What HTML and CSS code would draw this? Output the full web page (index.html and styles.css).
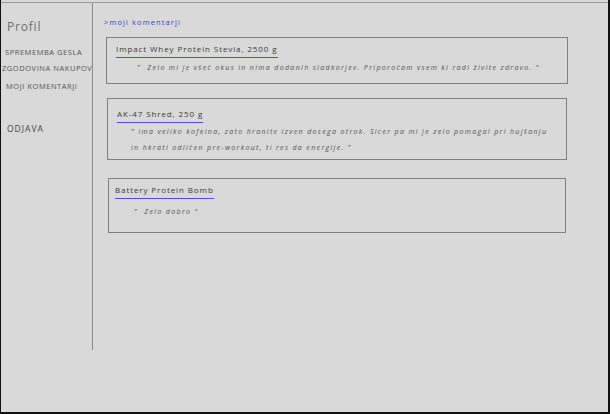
FILE: index.html
```html
<!DOCTYPE html>
<html>
<head>
<meta charset="utf-8">
<link rel="stylesheet" href="styles.css">
</head>
<body>
<div class="frame">
  <div class="layout">
    <aside class="sidebar">
      <div class="title">Profil</div>
      <nav class="nav">
        <div class="nav-item i1">SPREMEMBA GESLA</div>
        <div class="nav-item i2">ZGODOVINA NAKUPOV</div>
        <div class="nav-item i3">MOJI KOMENTARJI</div>
      </nav>
      <div class="logout">ODJAVA</div>
    </aside>
    <main class="main">
      <div class="crumb">&gt;moji komentarji</div>
      <div class="card c1">
        <div class="card-title">Impact Whey Protein Stevia, 2500 g</div>
        <p class="comment">"&nbsp; Zelo mi je všeč okus in nima dodanih sladkorjev. Priporočam vsem ki radi živite zdravo. "</p>
      </div>
      <div class="card c2">
        <div class="card-title">AK-47 Shred, 250 g</div>
        <p class="comment">" Ima veliko kofeina, zato hranite izven dosega otrok. Sicer pa mi je zelo pomagal pri hujšanju in hkrati odličen pre-workout, ti res da energije. "</p>
      </div>
      <div class="card c3">
        <div class="card-title">Battery Protein Bomb</div>
        <p class="comment">"&nbsp; Zelo dobro "</p>
      </div>
    </main>
  </div>
</div>
</body>
</html>
```
FILE: styles.css
```css
html, body {
  margin: 0;
  padding: 0;
  background: #111;
}
body {
  width: 610px;
  height: 414px;
  overflow: hidden;
  font-family: "Open Sans", "DejaVu Sans", sans-serif;
}
.frame {
  box-sizing: border-box;
  width: 610px;
  height: 412px;
  background: #d9d9d9;
  border-left: 1px solid #111;
  border-right: 2px solid #111;
  padding-top: 2px;
}
.layout {
  display: flex;
  border-top: 1px solid #9a9a9a;
  height: 347px;
}
.sidebar {
  width: 91px;
  flex: none;
  border-right: 1px solid #8a8a8a;
  color: #555;
}
.title {
  font-size: 12px;
  letter-spacing: 0.8px;
  color: #707070;
  padding: 16px 0 0 6px;
  line-height: 16px;
}
.nav {
  margin-top: 12px;
}
.nav-item {
  font-size: 7.5px;
  letter-spacing: 0.55px;
  line-height: 10px;
  white-space: nowrap;
}
.i1 { padding-left: 4px; }
.i2 { padding-left: 1px; margin-top: 6px; }
.i3 { padding-left: 5px; margin-top: 8px; }
.logout {
  font-size: 8.5px;
  letter-spacing: 1px;
  padding-left: 6px;
  margin-top: 32px;
  color: #444;
}
.main {
  flex: 1;
  padding: 14px 0 0 11px;
}
.crumb {
  font-size: 7.5px;
  letter-spacing: 1.1px;
  color: #3b3be0;
  line-height: 10px;
}
.card {
  box-sizing: border-box;
  border: 1px solid #808080;
  width: 462px;
  color: #333;
}
.c1 { margin-top: 10px; margin-left: 2px; height: 47px; padding: 5px 0 0 9px; }
.c2 { margin-top: 14px; margin-left: 3px; width: 460px; height: 62px; padding: 9px 0 0 9px; }
.c3 { margin-top: 18px; margin-left: 4px; width: 458px; height: 55px; padding: 5px 0 0 6px; }
.card-title {
  width: fit-content;
  font-size: 8px;
  letter-spacing: 0.9px;
  line-height: 12px;
  padding-bottom: 2px;
  border-bottom: 1px solid #5050e0;
  color: #3a3a3a;
}
.comment {
  margin: 0;
  font-size: 7px;
  font-style: italic;
  letter-spacing: 1.35px;
  line-height: 16px;
  color: #555;
  padding-right: 16px;
}
.c1 .comment { padding-left: 21px; margin-top: 2px; }
.c2 .comment { padding-left: 14px; margin-top: 1px; }
.c3 .comment { padding-left: 19px; margin-top: 5px; }
```
